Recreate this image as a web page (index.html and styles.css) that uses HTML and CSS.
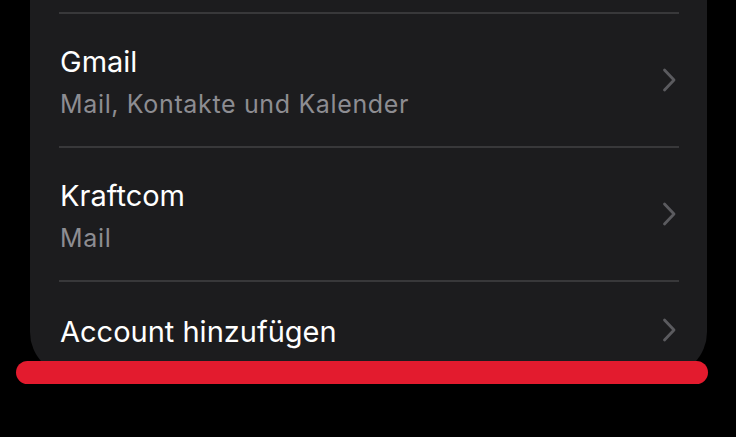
FILE: index.html
```html
<!DOCTYPE html>
<html lang="de">
<head>
<meta charset="utf-8">
<link rel="stylesheet" href="styles.css">
</head>
<body>
<div class="screen">
  <div class="card">
    <div class="sep"></div>
    <div class="row">
      <div class="text">
        <div class="title">Gmail</div>
        <div class="sub">Mail, Kontakte und Kalender</div>
      </div>
      <svg class="chev" viewBox="0 0 15 24" width="15" height="24"><path d="M2.5 2 L12 12 L2.5 22" fill="none" stroke="#5b5b5f" stroke-width="2.8" stroke-linecap="round" stroke-linejoin="round"/></svg>
    </div>
    <div class="sep"></div>
    <div class="row">
      <div class="text">
        <div class="title">Kraftcom</div>
        <div class="sub">Mail</div>
      </div>
      <svg class="chev" viewBox="0 0 15 24" width="15" height="24"><path d="M2.5 2 L12 12 L2.5 22" fill="none" stroke="#5b5b5f" stroke-width="2.8" stroke-linecap="round" stroke-linejoin="round"/></svg>
    </div>
    <div class="sep"></div>
    <div class="row row-single">
      <div class="text">
        <div class="title">Account hinzufügen</div>
      </div>
      <svg class="chev" viewBox="0 0 15 24" width="15" height="24"><path d="M2.5 2 L12 12 L2.5 22" fill="none" stroke="#5b5b5f" stroke-width="2.8" stroke-linecap="round" stroke-linejoin="round"/></svg>
    </div>
  </div>
  <div class="mark"></div>
</div>
</body>
</html>
```
FILE: styles.css
```css
html, body {
  margin: 0;
  padding: 0;
  background: #000;
}
body {
  width: 736px;
  height: 437px;
  overflow: hidden;
  font-family: Inter, "Noto Sans", "Liberation Sans", sans-serif;
  -webkit-font-smoothing: antialiased;
}
.screen {
  position: relative;
  width: 736px;
  height: 437px;
}
.card {
  margin-left: 30px;
  width: 677px;
  box-sizing: border-box;
  padding-top: 12px;
  background: #1c1c1e;
  border-radius: 0 0 44px 44px;
  display: flex;
  flex-direction: column;
}
.sep {
  flex-shrink: 0;
  height: 2px;
  background: #38383a;
  margin: 0 28px 0 29px;
}
.row {
  flex-shrink: 0;
  height: 132px;
  box-sizing: border-box;
  display: flex;
  align-items: center;
  justify-content: space-between;
  padding: 3px 30px 0 30px;
}
.row-single {
  height: 94px;
  padding-top: 5px;
}
.text {
  display: flex;
  flex-direction: column;
}
.title {
  color: #ffffff;
  font-size: 29px;
  line-height: 38px;
}
.sub {
  color: #8d8d92;
  font-size: 25px;
  line-height: 34px;
  letter-spacing: 0.65px;
  margin-top: 6px;
}
.chev {
  display: block;
  margin-top: -4px;
}
.mark {
  position: absolute;
  left: 16px;
  top: 361px;
  width: 692px;
  height: 23px;
  border-radius: 12px;
  background: #e31b2e;
}
```
